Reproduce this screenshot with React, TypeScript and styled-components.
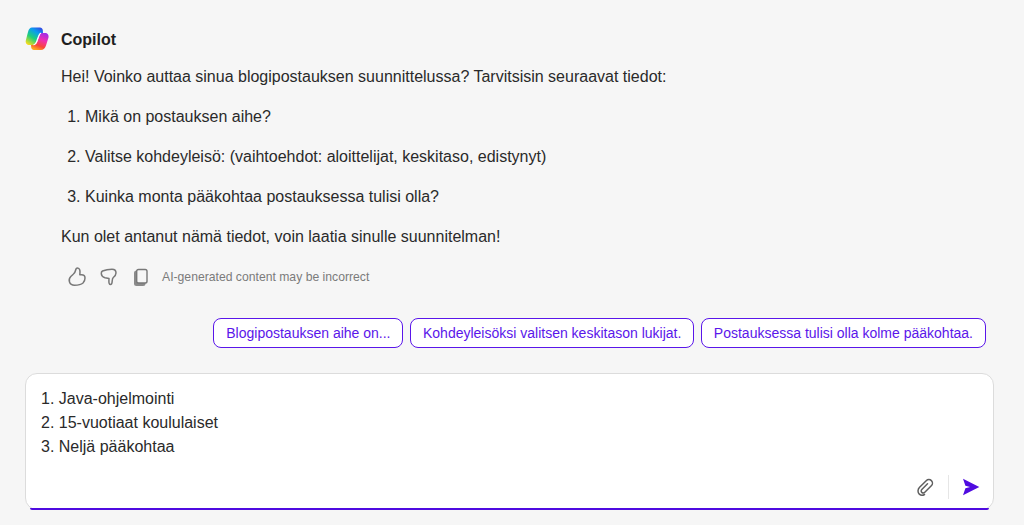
import React from "react";
import styled, { createGlobalStyle } from "styled-components";

const GlobalStyle = createGlobalStyle`
  html, body {
    margin: 0;
    height: 100%;
    background: #f6f6f6;
    font-family: "Liberation Sans", Arial, sans-serif;
    color: #242424;
  }
  #root {
    height: 100%;
  }
`;

const Page = styled.div`
  width: 1024px;
  height: 525px;
  overflow: hidden;
  box-sizing: border-box;
  padding: 28px 30px 15px 25px;
  display: flex;
  flex-direction: column;
`;

const Header = styled.div`
  display: flex;
  align-items: center;
  gap: 12px;
  height: 24px;
`;

const LogoMark = styled.svg`
  margin-top: -2px;
  flex: none;
`;

const Name = styled.div`
  font-size: 16px;
  font-weight: 700;
  color: #1f1f1f;
`;

const Message = styled.div`
  margin-left: 36px;
  margin-top: 15px;
  font-size: 16px;
  line-height: 20px;
  color: #2a2a2a;
`;

const Paragraph = styled.p`
  margin: 0;
`;

const Steps = styled.ol`
  margin: 20px 0;
  padding: 0 0 0 24px;
  display: flex;
  flex-direction: column;
  gap: 20px;
`;

const Feedback = styled.div`
  display: flex;
  align-items: center;
  margin: 20px 0 0 42px;
  height: 20px;
`;

const IconButton = styled.span`
  display: inline-flex;
  width: 20px;
  height: 20px;
  margin-right: 12px;
  color: #787878;
`;

const Disclaimer = styled.span`
  margin-left: -1px;
  font-size: 12.2px;
  color: #7b7b7b;
`;

const Suggestions = styled.div`
  display: flex;
  justify-content: flex-end;
  gap: 6.5px;
  margin: 31px 8px 0 0;
`;

const Suggestion = styled.button`
  height: 30px;
  padding: 0 12px;
  box-sizing: border-box;
  border: 1px solid #5a16ea;
  border-radius: 8px;
  background: #ffffff;
  color: #5a16ea;
  font: 14px "Liberation Sans", Arial, sans-serif;
  white-space: nowrap;
`;

const Composer = styled.div`
  position: relative;
  margin-top: 25px;
  height: 137px;
  box-sizing: border-box;
  background: #ffffff;
  border: 1px solid #dcdcdc;
  border-radius: 12px;
  padding: 13px 13px 10px 15px;
  display: flex;
  flex-direction: column;
  justify-content: space-between;

  &::after {
    content: "";
    position: absolute;
    left: 4px;
    right: 4px;
    bottom: -1px;
    height: 2px;
    border-radius: 0 0 8px 8px;
    background: #4f0be0;
  }
`;

const Draft = styled.div`
  font-size: 16px;
  line-height: 24px;
  color: #2a2a2a;
`;

const Actions = styled.div`
  display: flex;
  justify-content: flex-end;
  align-items: center;
`;

const Divider = styled.span`
  width: 1px;
  height: 24px;
  margin: 0 13px;
  background: #e6e6e6;
`;

const Logo = () => (
  <LogoMark width="24" height="24" viewBox="0 0 24 24">
    <defs>
      <linearGradient id="logoLeft" x1="0.85" y1="0" x2="0.2" y2="1">
        <stop offset="0" stopColor="#3348e4" />
        <stop offset="0.28" stopColor="#0a9cf0" />
        <stop offset="0.62" stopColor="#1fd07a" />
        <stop offset="1" stopColor="#f6dc1c" />
      </linearGradient>
      <linearGradient id="logoRight" x1="0.75" y1="0" x2="0.35" y2="1">
        <stop offset="0" stopColor="#a02de8" />
        <stop offset="0.4" stopColor="#f02fb0" />
        <stop offset="0.75" stopColor="#f8453a" />
        <stop offset="1" stopColor="#ffa41f" />
      </linearGradient>
    </defs>
    <path d="M7 .5H15C16.500 .5 17.500 1.500 17.800 3L18 6H16.500C15 6 14.200 7 13.800 8.500L11.500 15.500C11 17 10 18 8 18H4.500C1.800 18 .2 16 .8 13.500L3 5C3.800 2 5 .5 7 .5Z" fill="url(#logoLeft)" />
    <path d="M16.500 6H20C22.500 6 24 8 23.500 10.500L21 18.500C20.200 21 18.500 23 16 23H9C7.500 23 6.500 22 6.200 20.500L6 18H8C10 18 11.500 17 12.200 15L14.500 8.500C15 7 15.500 6 16.500 6Z" fill="url(#logoRight)" />
    <path d="M16 6C14.500 6.500 14 8 13.500 9.500L11.500 15C11 16.500 10 17.500 8.500 18" fill="none" stroke="#ffffff" strokeWidth="1.200" />
  </LogoMark>
);

const ThumbUp = () => (
  <svg width="20" height="20" viewBox="0 0 20 20" fill="none" stroke="currentColor" strokeWidth="1.500" strokeLinejoin="round" strokeLinecap="round">
    <path d="M10.500 1C9.300 1 8.800 2 8.500 3.500C8.200 5 7.500 6.500 6 7.500L3.800 9.500C2.300 11 1.800 13 2.500 15C3.200 17 5 18.300 7.500 18.300C11 18.300 14 17.800 16 16C17.500 14.500 18 12.500 18 11C18 9 16.500 7.800 14.500 7.800L12.800 7.800C13 6 13.200 4.500 12.800 3C12.400 1.800 11.500 1 10.500 1Z" />
  </svg>
);

const ThumbDown = () => (
  <svg width="20" height="20" viewBox="0 0 20 20" fill="none" stroke="currentColor" strokeWidth="1.500" strokeLinejoin="round" strokeLinecap="round">
    <path d="M3.500 4C6 3 10 2.300 13 2.300C15.500 2.300 17 4 17 6C17 8 15.500 9.500 14.300 10.500C13.500 11.300 13.300 12.500 13.200 14C13.100 16 12.700 17.600 11.500 17.600C10.300 17.600 9.800 16 9.900 14L10 11.500L6 10.800C4 10.300 2.500 8.800 2.300 6.800C2.200 5.500 2.600 4.500 3.500 4Z" />
  </svg>
);

const CopyIcon = () => (
  <svg width="20" height="20" viewBox="0 0 20 20">
    <rect x="3" y="3.500" width="11.500" height="15.500" rx="2.500" fill="#8a8a8a" />
    <rect x="5.700" y="2.500" width="10.300" height="13.500" rx="1.800" fill="#f6f6f6" stroke="currentColor" strokeWidth="1.400" />
  </svg>
);

const PaperClip = () => (
  <svg width="20" height="20" viewBox="0 0 20 20" fill="none" stroke="#5f5f5f" strokeWidth="1.500" strokeLinecap="round" strokeLinejoin="round">
    <path d="M12.500 6.800L6.800 12.500C5.900 13.400 6 14.700 6.800 15.400C7.700 16.200 9 16.100 9.800 15.300L16.300 8.800C17.800 7.300 17.800 5 16.400 3.600C15 2.200 12.700 2.200 11.200 3.700L4.600 10.300C2.600 12.300 2.500 15.400 4.300 17.100C5.700 18.400 7.800 18.500 9.500 17.500" />
  </svg>
);

const SendIcon = () => (
  <svg width="18" height="18" viewBox="0 0 18 18">
    <path d="M1 .8L17.300 9L1 17.200L3.400 10.200L8 9L3.400 7.800Z" fill="#4f0be0" />
  </svg>
);

const App: React.FC = () => {
  return (
    <>
      <GlobalStyle />
      <Page>
        <Header>
          <Logo />
          <Name>Copilot</Name>
        </Header>
        <Message>
          <Paragraph>
            Hei! Voinko auttaa sinua blogipostauksen suunnittelussa? Tarvitsisin seuraavat tiedot:
          </Paragraph>
          <Steps>
            <li>Mikä on postauksen aihe?</li>
            <li>Valitse kohdeyleisö: (vaihtoehdot: aloittelijat, keskitaso, edistynyt)</li>
            <li>Kuinka monta pääkohtaa postauksessa tulisi olla?</li>
          </Steps>
          <Paragraph>Kun olet antanut nämä tiedot, voin laatia sinulle suunnitelman!</Paragraph>
        </Message>
        <Feedback>
          <IconButton><ThumbUp /></IconButton>
          <IconButton><ThumbDown /></IconButton>
          <IconButton><CopyIcon /></IconButton>
          <Disclaimer>AI-generated content may be incorrect</Disclaimer>
        </Feedback>
        <Suggestions>
          <Suggestion>Blogipostauksen aihe on...</Suggestion>
          <Suggestion>Kohdeyleisöksi valitsen keskitason lukijat.</Suggestion>
          <Suggestion>Postauksessa tulisi olla kolme pääkohtaa.</Suggestion>
        </Suggestions>
        <Composer>
          <Draft>
            <div>1. Java-ohjelmointi</div>
            <div>2. 15-vuotiaat koululaiset</div>
            <div>3. Neljä pääkohtaa</div>
          </Draft>
          <Actions>
            <PaperClip />
            <Divider />
            <SendIcon />
          </Actions>
        </Composer>
      </Page>
    </>
  );
};

export default App;
